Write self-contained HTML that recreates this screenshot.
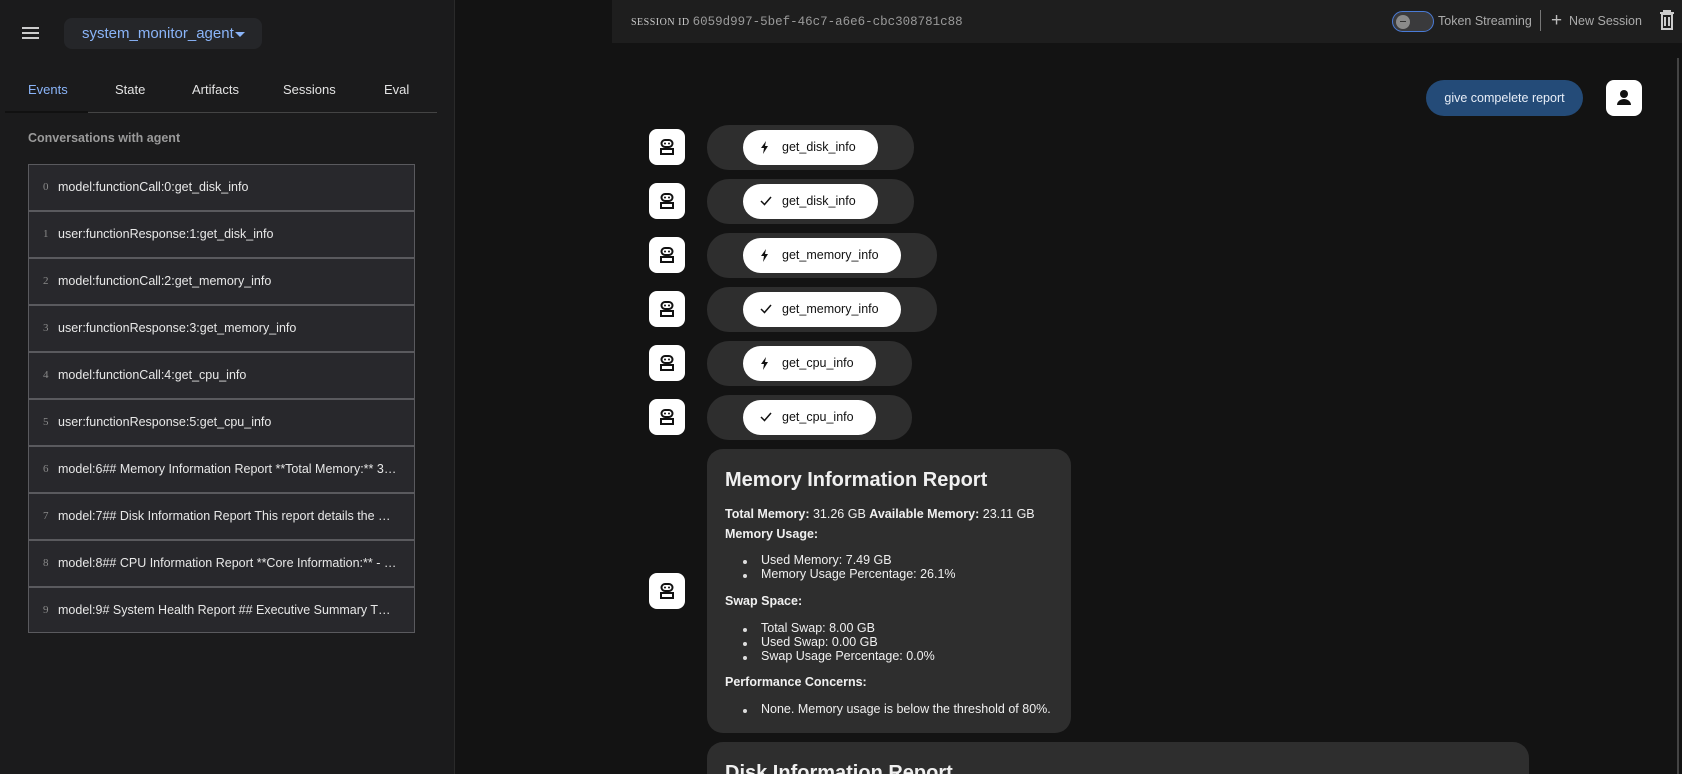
<!DOCTYPE html>
<html style="overflow:hidden;height:774px"><head><meta charset="utf-8"><style>
*{box-sizing:border-box;margin:0;padding:0}
body{width:1682px;height:774px;overflow:hidden;background:#131313;font-family:"Liberation Sans",sans-serif;position:relative;color:#e3e3e3}
.a{position:absolute}
.side{left:0;top:0;width:455px;height:774px;background:#1b1b1c;border-right:1px solid #2a2a2a}
.tab{position:absolute;top:82px;font-size:13px;color:#e3e3e3}
.row{position:absolute;left:0;width:386px;height:47px;border-bottom:2px solid #5a5a5e;font-size:12.5px;color:#e8e8e8;line-height:45px;padding-left:29px;white-space:nowrap;overflow:hidden}
.row span{position:absolute;left:14px;color:#8a8a8a;font-size:11px;font-family:"Liberation Serif",serif}
.av{position:absolute;width:36px;height:36px;background:#fff;border-radius:8px}
.cont{position:absolute;left:707px;height:45px;background:#2e2e2e;border-radius:22px}
.pill{position:absolute;left:743px;height:35px;background:#fff;border-radius:18px;color:#111;font-size:12.5px;line-height:35px;padding-left:39px}
.pill svg{position:absolute;left:17px;top:11px}
.card{position:absolute;background:#2e2e2e;border-radius:16px;color:#f0f0f0;font-size:12.5px;overflow:hidden}
.card h2{font-size:20px;font-weight:bold;position:absolute;left:18px}
.card p{position:absolute;left:18px;white-space:nowrap}
.card li{position:absolute;left:54px;white-space:nowrap;list-style:none}
.card li:before{content:"";position:absolute;left:-18px;top:7px;width:4px;height:4px;border-radius:2px;background:#ddd}
</style></head><body>
<div class="a side">
 <div class="a" style="left:22px;top:27px;width:17px;height:2px;background:#ccc;box-shadow:0 5px 0 #ccc,0 10px 0 #ccc"></div>
 <div class="a" style="left:64px;top:18px;width:198px;height:31px;background:#252629;border-radius:8px;color:#8ab4f8;font-size:15px;line-height:31px;padding-left:18px">system_monitor_agent<span style="position:absolute;left:171px;top:14px;border:5px solid transparent;border-top-color:#8ab4f8;border-bottom:0"></span></div>
 <div class="tab" style="left:28px;color:#8ab4f8">Events</div>
 <div class="tab" style="left:115px">State</div>
 <div class="tab" style="left:192px">Artifacts</div>
 <div class="tab" style="left:283px">Sessions</div>
 <div class="tab" style="left:384px">Eval</div>
 <div class="a" style="left:5px;top:112px;width:432px;height:1px;background:#444"></div>
 <div class="a" style="left:5px;top:111px;width:83px;height:2px;background:#111"></div>
 <div class="a" style="left:28px;top:131px;font-size:12.5px;font-weight:bold;color:#9a9a9a">Conversations with agent</div>
 <div class="a" style="left:28px;top:164px;width:387px;height:469px;background:#28282c;border:1px solid #5a5a5e">
  <div class="row" style="top:0"><span>0</span>model:functionCall:0:get_disk_info</div>
  <div class="row" style="top:47px"><span>1</span>user:functionResponse:1:get_disk_info</div>
  <div class="row" style="top:94px"><span>2</span>model:functionCall:2:get_memory_info</div>
  <div class="row" style="top:141px"><span>3</span>user:functionResponse:3:get_memory_info</div>
  <div class="row" style="top:188px"><span>4</span>model:functionCall:4:get_cpu_info</div>
  <div class="row" style="top:235px"><span>5</span>user:functionResponse:5:get_cpu_info</div>
  <div class="row" style="top:282px"><span>6</span>model:6## Memory Information Report **Total Memory:** 3…</div>
  <div class="row" style="top:329px"><span>7</span>model:7## Disk Information Report This report details the …</div>
  <div class="row" style="top:376px"><span>8</span>model:8## CPU Information Report **Core Information:** - …</div>
  <div class="row" style="top:423px;border-bottom:0"><span>9</span>model:9# System Health Report ## Executive Summary T…</div>
 </div>
</div>
<div class="a" style="left:612px;top:0;width:1070px;height:43px;background:#1e1e1e"></div>
<div class="a" style="left:631px;top:15px;font-size:10px;font-family:'Liberation Serif',serif;color:#ccc;letter-spacing:0.5px">SESSION ID <span style="font-family:'Liberation Mono',monospace;font-size:12.5px;color:#9a9a9a;letter-spacing:0">6059d997-5bef-46c7-a6e6-cbc308781c88</span></div>
<div class="a" style="left:1392px;top:11px;width:42px;height:21px;border-radius:11px;background:#3a3a3c;border:1px solid #4a7bd6"><div class="a" style="left:3px;top:3px;width:14px;height:14px;border-radius:7px;background:#8a8a8a"><div class="a" style="left:4px;top:6px;width:6px;height:1px;background:#333"></div></div></div>
<div class="a" style="left:1438px;top:14px;font-size:12.5px;color:#aaa">Token Streaming</div>
<div class="a" style="left:1540px;top:10px;width:1px;height:21px;background:#777"></div>
<div class="a" style="left:1551px;top:12px;font-size:19px;color:#bbb;line-height:18px">+</div>
<div class="a" style="left:1569px;top:14px;font-size:12.5px;color:#aaa">New Session</div>
<svg class="a" style="left:1659px;top:10px" width="16" height="20" viewBox="0 0 16 20"><path d="M1 3h14M5 3V1h6v2M3 4h10v15H3z M6 7v9M10 7v9" fill="none" stroke="#ccc" stroke-width="2"/></svg>
<div class="a" style="left:1677px;top:58px;width:2px;height:716px;background:#444"></div>
<div class="a" style="left:1426px;top:80px;width:157px;height:36px;background:#244b78;border-radius:18px;color:#e8eef8;font-size:12.5px;line-height:36px;text-align:center">give compelete report</div>
<div class="av" style="left:1606px;top:80px"><svg class="a" style="left:9px;top:8px" width="18" height="20" viewBox="0 0 18 20"><circle cx="9" cy="6" r="4" fill="#111"/><path d="M2 17c0-4 4-6 7-6s7 2 7 6z" fill="#111"/></svg></div>

<div class="cont" style="top:125px;width:207px"></div><div class="pill" style="top:130px;width:135px"><svg width="10" height="13" viewBox="0 0 10 13"><path d="M6 0L1 7h3l-1 6 5-8H5z" fill="#111"/></svg>get_disk_info</div>
<div class="cont" style="top:179px;width:207px"></div><div class="pill" style="top:184px;width:135px"><svg width="12" height="12" viewBox="0 0 12 12"><path d="M1 6l3.5 3.5L11 2" fill="none" stroke="#111" stroke-width="1.5"/></svg>get_disk_info</div>
<div class="cont" style="top:233px;width:230px"></div><div class="pill" style="top:238px;width:158px"><svg width="10" height="13" viewBox="0 0 10 13"><path d="M6 0L1 7h3l-1 6 5-8H5z" fill="#111"/></svg>get_memory_info</div>
<div class="cont" style="top:287px;width:230px"></div><div class="pill" style="top:292px;width:158px"><svg width="12" height="12" viewBox="0 0 12 12"><path d="M1 6l3.5 3.5L11 2" fill="none" stroke="#111" stroke-width="1.5"/></svg>get_memory_info</div>
<div class="cont" style="top:341px;width:205px"></div><div class="pill" style="top:346px;width:133px"><svg width="10" height="13" viewBox="0 0 10 13"><path d="M6 0L1 7h3l-1 6 5-8H5z" fill="#111"/></svg>get_cpu_info</div>
<div class="cont" style="top:395px;width:205px"></div><div class="pill" style="top:400px;width:133px"><svg width="12" height="12" viewBox="0 0 12 12"><path d="M1 6l3.5 3.5L11 2" fill="none" stroke="#111" stroke-width="1.5"/></svg>get_cpu_info</div>

<svg width="0" height="0" style="position:absolute"><defs><g id="bot"><rect x="2.5" y="1" width="11" height="7" rx="3.5" fill="none" stroke="#111" stroke-width="2"/><circle cx="6" cy="4.5" r="1" fill="#111"/><circle cx="10" cy="4.5" r="1" fill="#111"/><rect x="2" y="10" width="12" height="5" fill="none" stroke="#111" stroke-width="2"/></g></defs></svg>
<div class="av" style="left:649px;top:129px"><svg class="a" style="left:10px;top:10px" width="16" height="16"><use href="#bot"/></svg></div>
<div class="av" style="left:649px;top:183px"><svg class="a" style="left:10px;top:10px" width="16" height="16"><use href="#bot"/></svg></div>
<div class="av" style="left:649px;top:237px"><svg class="a" style="left:10px;top:10px" width="16" height="16"><use href="#bot"/></svg></div>
<div class="av" style="left:649px;top:291px"><svg class="a" style="left:10px;top:10px" width="16" height="16"><use href="#bot"/></svg></div>
<div class="av" style="left:649px;top:345px"><svg class="a" style="left:10px;top:10px" width="16" height="16"><use href="#bot"/></svg></div>
<div class="av" style="left:649px;top:399px"><svg class="a" style="left:10px;top:10px" width="16" height="16"><use href="#bot"/></svg></div>
<div class="av" style="left:649px;top:573px"><svg class="a" style="left:10px;top:10px" width="16" height="16"><use href="#bot"/></svg></div>

<div class="card" style="left:707px;top:449px;width:364px;height:284px">
 <h2 style="top:20px">Memory Information Report</h2>
 <p style="top:58px"><b>Total Memory:</b> 31.26 GB <b>Available Memory:</b> 23.11 GB</p>
 <p style="top:78px"><b>Memory Usage:</b></p>
 <li style="top:104px">Used Memory: 7.49 GB</li>
 <li style="top:118px">Memory Usage Percentage: 26.1%</li>
 <p style="top:145px"><b>Swap Space:</b></p>
 <li style="top:172px">Total Swap: 8.00 GB</li>
 <li style="top:186px">Used Swap: 0.00 GB</li>
 <li style="top:200px">Swap Usage Percentage: 0.0%</li>
 <p style="top:226px"><b>Performance Concerns:</b></p>
 <li style="top:253px">None. Memory usage is below the threshold of 80%.</li>
</div>
<div class="card" style="left:707px;top:742px;width:822px;height:32px;border-radius:16px 16px 0 0">
 <h2 style="top:20px">Disk Information Report</h2>
</div>
</body></html>
